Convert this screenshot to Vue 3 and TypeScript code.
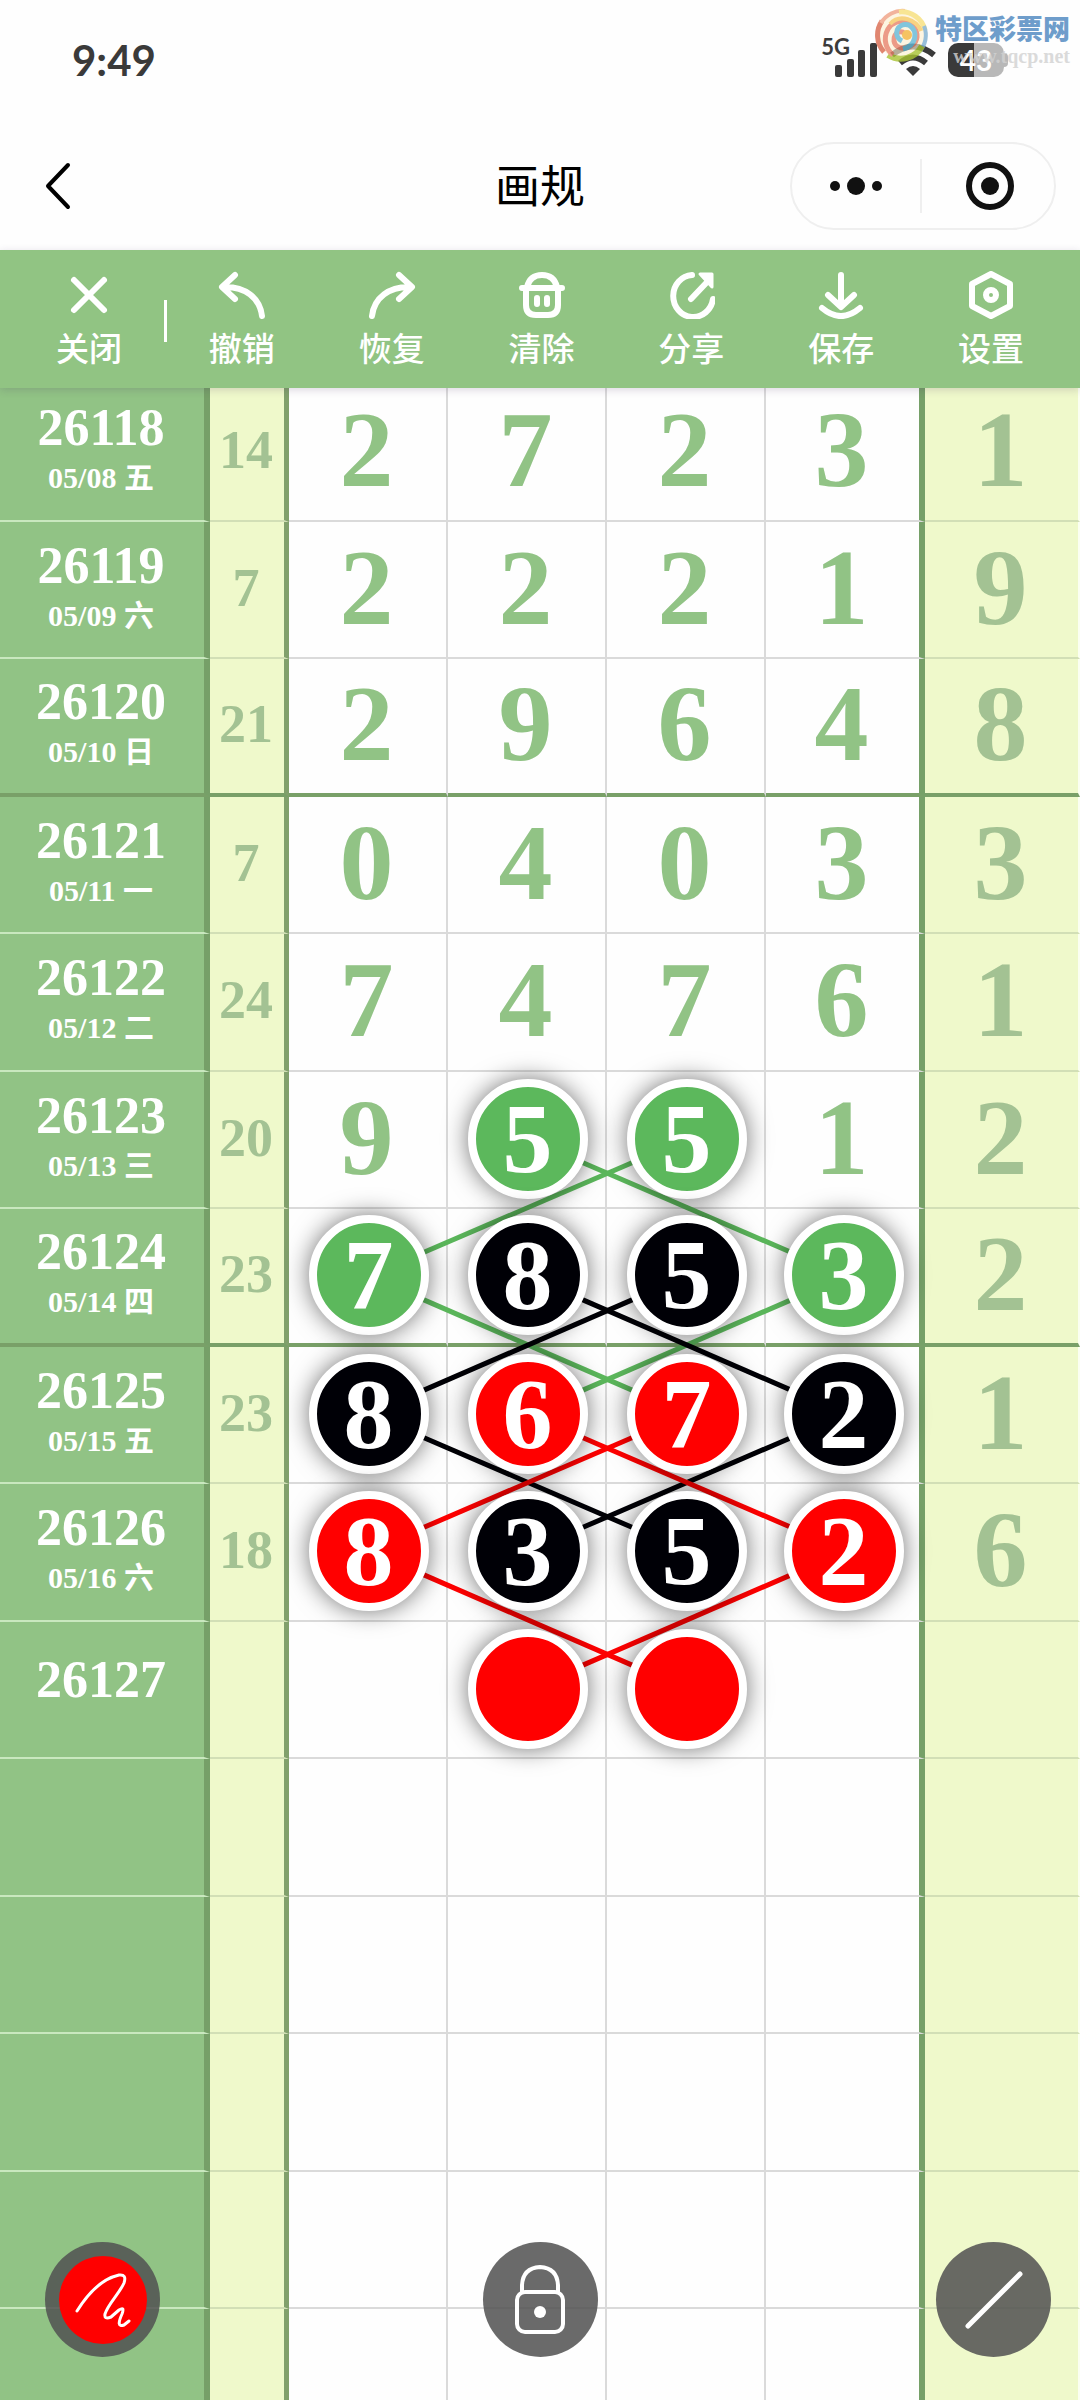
<script setup lang="ts">
type Tone = 'green' | 'black' | 'red'

interface Draw {
  issue: string
  date: string
  sum: string
  digits: string[]
  last: string
  balls?: (Tone | null)[]
  groupEnd?: boolean
}

const g: Tone = 'green'
const k: Tone = 'black'
const r: Tone = 'red'

const draws: Draw[] = [
  { issue: '26118', date: '05/08 五', sum: '14', digits: ['2', '7', '2', '3'], last: '1' },
  { issue: '26119', date: '05/09 六', sum: '7', digits: ['2', '2', '2', '1'], last: '9' },
  { issue: '26120', date: '05/10 日', sum: '21', digits: ['2', '9', '6', '4'], last: '8', groupEnd: true },
  { issue: '26121', date: '05/11 一', sum: '7', digits: ['0', '4', '0', '3'], last: '3' },
  { issue: '26122', date: '05/12 二', sum: '24', digits: ['7', '4', '7', '6'], last: '1' },
  { issue: '26123', date: '05/13 三', sum: '20', digits: ['9', '5', '5', '1'], last: '2', balls: [null, g, g, null] },
  { issue: '26124', date: '05/14 四', sum: '23', digits: ['7', '8', '5', '3'], last: '2', balls: [g, k, k, g], groupEnd: true },
  { issue: '26125', date: '05/15 五', sum: '23', digits: ['8', '6', '7', '2'], last: '1', balls: [k, r, r, k] },
  { issue: '26126', date: '05/16 六', sum: '18', digits: ['8', '3', '5', '2'], last: '6', balls: [r, k, k, r] },
  { issue: '26127', date: '', sum: '', digits: ['', '', '', ''], last: '', balls: [null, r, r, null] },
  ...Array.from({ length: 5 }, () => ({ issue: '', date: '', sum: '', digits: ['', '', '', ''], last: '' })),
]

// Each link joins two cells given as [column, row].
interface Link { from: [number, number]; to: [number, number]; tone: Tone }

const hexagon = (top: number, tone: Tone): Link[] => [
  { from: [1, top], to: [3, top + 1], tone },
  { from: [2, top], to: [0, top + 1], tone },
  { from: [0, top + 1], to: [2, top + 2], tone },
  { from: [3, top + 1], to: [1, top + 2], tone },
]

const colours: Record<Tone, string> = { green: '#5cb85c', black: '#000006', red: '#ff0000' }

// Row heights alternate between 138 and 137.
const cx = (col: number) => 80 + col * 159
const cy = (row: number) => Math.ceil(row * 137.5) + 67

const lines = [...hexagon(5, g), ...hexagon(6, k), ...hexagon(7, r)].map(({ from, to, tone }) => {
  const [x1, y1, x2, y2] = [cx(from[0]), cy(from[1]), cx(to[0]), cy(to[1])]
  const len = Math.hypot(x2 - x1, y2 - y1)
  const dx = ((x2 - x1) / len) * 58
  const dy = ((y2 - y1) / len) * 58
  return { x1: x1 + dx, y1: y1 + dy, x2: x2 - dx, y2: y2 - dy, stroke: colours[tone] }
})

const tools = [
  { name: 'undo', label: '撤销' },
  { name: 'redo', label: '恢复' },
  { name: 'clear', label: '清除' },
  { name: 'share', label: '分享' },
  { name: 'save', label: '保存' },
  { name: 'settings', label: '设置' },
]
</script>

<template>
  <div class="screen">
    <div class="status">
      <span class="clock">9:49</span>
      <div class="indicators">
        <span class="net">5G</span>
        <svg class="signal" width="44" height="34" viewBox="0 0 44 34" fill="#3a3a3a">
          <rect x="1" y="22" width="7" height="12" rx="2" />
          <rect x="13" y="16" width="7" height="18" rx="2" />
          <rect x="24" y="7" width="7" height="27" rx="2" />
          <rect x="36" y="0" width="7" height="34" rx="2" />
        </svg>
        <svg class="wifi" width="46" height="34" viewBox="0 0 46 34" fill="none" stroke="#3a3a3a" stroke-width="6">
          <path d="M2 12Q23 -5 44 12" />
          <path d="M10 20Q23 9 36 20" />
          <path d="M23 33L16 26Q23 20 30 26Z" fill="#3a3a3a" stroke="none" />
        </svg>
        <div class="battery"><span>43</span></div>
        <i class="nub"></i>
      </div>
      <div class="mark">
        <svg width="54" height="54" viewBox="0 0 54 54" fill="none">
          <circle cx="27" cy="27" r="24" fill="#fdf0d2" fill-opacity=".8" />
          <path d="M9 44A25 25 0 0 1 7 13" stroke="#d9694d" stroke-width="5" />
          <path d="M6 15A25 25 0 0 1 30 3" stroke="#f0a184" stroke-width="4" />
          <path d="M24 4A24 24 0 0 1 50 22" stroke="#f7e07a" stroke-width="5" />
          <path d="M49 18A24 24 0 0 1 44 44" stroke="#7fb0d0" stroke-width="4" />
          <path d="M47 38A24 24 0 0 1 13 47" stroke="#a9c433" stroke-width="6" />
          <path d="M31 28C28 20 18 24 19 33C21 44 40 42 42 29C43 14 22 7 13 21C7 32 12 42 18 47" stroke="#e8836a" stroke-width="5" />
          <path d="M27 33C17 28 22 14 34 17C44 23 41 38 28 41" stroke="#62b8d4" stroke-width="5" />
          <path d="M15 16C25 5 42 12 46 23" stroke="#f6c963" stroke-width="4" />
          <circle cx="32" cy="27" r="5" fill="#f3b53c" />
        </svg>
        <div class="mark-text">
          <strong>特区彩票网</strong>
          <span>www.tqcp.net</span>
        </div>
      </div>
    </div>

    <header class="nav">
      <button class="back" aria-label="返回">
        <svg width="28" height="50" viewBox="0 0 28 50" fill="none" stroke="#000" stroke-width="4" stroke-linecap="round" stroke-linejoin="round">
          <path d="M24 4L4 25L24 46" />
        </svg>
      </button>
      <h1>画规</h1>
      <div class="capsule">
        <button aria-label="更多">
          <svg width="54" height="20" viewBox="0 0 54 20" fill="#111">
            <circle cx="6" cy="10" r="5" /><circle cx="27" cy="10" r="9" /><circle cx="48" cy="10" r="5" />
          </svg>
        </button>
        <button aria-label="关闭小程序">
          <svg width="50" height="50" viewBox="0 0 50 50">
            <circle cx="25" cy="25" r="21" fill="none" stroke="#111" stroke-width="6" /><circle cx="25" cy="25" r="9" fill="#111" />
          </svg>
        </button>
      </div>
    </header>

    <nav class="toolbar">
      <button class="tool close">
        <svg viewBox="0 0 48 48"><path d="M9 9L39 39M39 9L9 39" /></svg>
        <span>关闭</span>
      </button>
      <i class="rule"></i>
      <button v-for="t in tools" :key="t.name" class="tool">
        <svg viewBox="0 0 48 48">
          <path v-if="t.name === 'undo'" d="M17 4L4 16L17 28M5 16C27 15 42 27 44 45" />
          <path v-else-if="t.name === 'redo'" d="M31 4L44 16L31 28M43 16C21 15 6 27 4 45" />
          <template v-else-if="t.name === 'clear'">
            <path d="M4 17H44M8 17V34Q8 44 18 44H30Q40 44 40 34V17M9 16Q12 4 24 4Q36 4 39 16" />
            <path d="M19 27V33M29 27V33" />
          </template>
          <template v-else-if="t.name === 'share'">
            <path d="M25 4A20 21 0 1 0 46 28M24 28L42 9" />
            <path d="M33 3H45V16Z" fill="#fff" stroke-width="3" />
          </template>
          <path v-else-if="t.name === 'save'" d="M24 4V34M11 24L24 36L37 24M5 37Q24 53 43 37" />
          <template v-else>
            <path d="M24 3L43 13V35L24 45L5 35V13Z" />
            <circle cx="24" cy="24" r="5" />
          </template>
        </svg>
        <span>{{ t.label }}</span>
      </button>
    </nav>

    <main class="chart">
      <table>
        <colgroup>
          <col class="c-issue" /><col class="c-sum" /><col /><col /><col /><col /><col class="c-last" />
        </colgroup>
        <tbody>
          <tr v-for="(d, i) in draws" :key="i" :class="{ group: d.groupEnd }">
            <th scope="row" :class="{ lone: d.issue && !d.date }">
              <div v-if="d.issue" class="issue">{{ d.issue }}</div>
              <div v-if="d.date" class="date">{{ d.date }}</div>
            </th>
            <td class="sum">{{ d.sum }}</td>
            <td v-for="(n, c) in d.digits" :key="c" class="digit" :class="{ hit: d.balls && d.balls[c] }">
              <span v-if="d.balls && d.balls[c]" class="ball" :class="d.balls[c]">{{ n }}</span>
              <span v-else class="plain">{{ n }}</span>
            </td>
            <td class="last"><span class="plain">{{ d.last }}</span></td>
          </tr>
        </tbody>
      </table>
      <svg class="links" viewBox="0 0 636 2063" preserveAspectRatio="none">
        <line v-for="(l, i) in lines" :key="i" v-bind="l" stroke-width="5" />
      </svg>
    </main>

    <div class="fabs">
      <button class="fab pen" aria-label="画笔">
        <svg width="88" height="88" viewBox="0 0 88 88" fill="none" stroke="#fff" stroke-width="3" stroke-linecap="round" stroke-linejoin="round">
          <circle cx="44" cy="44" r="44" fill="#f00" stroke="none" />
          <path d="M18 55C28 39 42 23 60 19Q68 18 65 27C60 38 49 48 46 58Q45 64 52 61L60 54Q66 50 63 58C59 67 59 71 65 69L70 65" />
        </svg>
      </button>
      <button class="fab" aria-label="锁定">
        <svg width="56" height="72" viewBox="0 0 56 72" fill="none" stroke="#fff" stroke-width="4">
          <rect x="5" y="28" width="46" height="40" rx="8" />
          <path d="M10 28V21Q11 4 28 3Q45 4 46 21V28" />
          <circle cx="28" cy="48" r="6" fill="#fff" stroke="none" />
        </svg>
      </button>
      <button class="fab" aria-label="直线">
        <svg width="60" height="60" viewBox="0 0 60 60" stroke="#fff" stroke-width="5" stroke-linecap="round">
          <path d="M4 56L56 4" />
        </svg>
      </button>
    </div>
  </div>
</template>

<style>
body {
  margin: 0;
  background: #fefefe;
}
</style>

<style scoped>
.screen {
  position: relative;
  display: flex;
  flex-direction: column;
  height: 100vh;
  overflow: hidden;
  background: #fefefe;
  font-family: "Noto Sans CJK SC", sans-serif;
}
button {
  border: 0;
  padding: 0;
  background: none;
  font: inherit;
  color: inherit;
}
svg {
  display: block;
}

.status {
  position: relative;
  flex: none;
  box-sizing: border-box;
  height: 122px;
  display: flex;
  align-items: center;
  justify-content: space-between;
  padding: 0 72px 2px;
}
.clock {
  font: 700 42px/48px Lato, sans-serif;
  color: #3a3a3a;
}
.indicators {
  display: flex;
  align-items: center;
}
.net {
  align-self: flex-start;
  margin-top: -8px;
  margin-right: -16px;
  font: 700 22px/24px Lato, sans-serif;
  color: #3a3a3a;
}
.wifi {
  margin: 0 12px;
}
.battery {
  width: 56px;
  height: 34px;
  border-radius: 10px;
  background: linear-gradient(90deg, #3a3a3a 46%, #b8b8b8 46%);
  font: 700 28px/34px Lato, sans-serif;
  text-align: center;
  color: #fff;
}
.nub {
  width: 4px;
  height: 14px;
  border-radius: 0 4px 4px 0;
  background: #b8b8b8;
}
.mark {
  position: absolute;
  top: 8px;
  right: 10px;
  display: flex;
  gap: 6px;
  opacity: .8;
}
.mark-text {
  display: flex;
  flex-direction: column;
}
.mark-text strong {
  font-size: 27px;
  line-height: 40px;
  font-weight: 900;
  color: #4b86bf;
}
.mark-text span {
  font: 700 20px/16px "Liberation Serif", serif;
  color: #d2d2d2;
  text-align: right;
}

.nav {
  flex: none;
  height: 128px;
  display: grid;
  grid-template-columns: 1fr auto 1fr;
  align-items: center;
}
.back {
  justify-self: start;
  margin-left: 44px;
}
h1 {
  margin: 0;
  padding-bottom: 4px;
  font-size: 45px;
  line-height: 60px;
  font-weight: 400;
  color: #000;
}
.capsule {
  justify-self: end;
  display: flex;
  align-items: center;
  box-sizing: border-box;
  width: 266px;
  height: 88px;
  margin-right: 24px;
  border: 2px solid #efefef;
  border-radius: 44px;
}
.capsule button {
  flex: 1;
  height: 54px;
  display: flex;
  align-items: center;
  justify-content: center;
}
.capsule button + button {
  padding-left: 4px;
  border-left: 2px solid #efefef;
}

.toolbar {
  position: relative;
  z-index: 5;
  flex: none;
  box-sizing: border-box;
  height: 138px;
  display: flex;
  align-items: center;
  padding: 4px 14px 0;
  background: #91c483;
  box-shadow: 0 2px 8px rgba(60, 40, 90, .18);
  color: #fff;
}
.tool {
  flex: 1;
  display: flex;
  flex-direction: column;
  align-items: center;
  gap: 4px;
  font-size: 33px;
  line-height: 48px;
  font-weight: 500;
}
.tool svg {
  width: 48px;
  height: 48px;
  fill: none;
  stroke: #fff;
  stroke-width: 6;
  stroke-linecap: round;
  stroke-linejoin: round;
}
.rule {
  width: 3px;
  height: 42px;
  background: #fff;
}

.chart {
  position: relative;
  flex: 1;
  min-height: 0;
  margin-top: -4px;
  overflow: hidden;
}
table {
  width: 100%;
  table-layout: fixed;
  border-collapse: separate;
  border-spacing: 0;
  font-family: "Liberation Serif", "Noto Sans CJK SC", serif;
  font-weight: 700;
}
.c-issue { width: 210px; }
.c-sum { width: 79px; }
.c-last { width: 155px; }
tr { height: 138px; }
tr:nth-child(even) { height: 137px; }
th, td {
  box-sizing: border-box;
  padding: 0 2px 4px 0;
  text-align: center;
  vertical-align: middle;
  border-bottom: 2px solid #dadada;
  border-right: 2px solid #dadada;
}
th {
  background: #91c385;
  border-bottom-color: #c9e8bf;
  border-right: 6px solid #76a068;
  color: #fff;
}
.lone { padding-bottom: 20px; }
.sum {
  background: #eff9cb;
  border-bottom-color: #d2dfb6;
  border-right: 5px solid #81a06c;
  font-size: 54px;
  line-height: 60px;
  color: #a3c293;
}
.digit {
  color: #91c385;
}
.hit {
  padding: 0 0 2px 2px;
}
.digit:nth-child(6) {
  border-right: 6px solid #76a068;
}
.last {
  background: #eff9cb;
  border-bottom-color: #d2dfb6;
  border-right-color: #fbfff2;
  color: #a3c293;
}
.group > * {
  border-bottom: 4px solid #79a068;
}
.issue {
  font-size: 52px;
  line-height: 56px;
}
.date {
  font-size: 30px;
  line-height: 44px;
}
.plain {
  display: block;
  font-size: 108px;
  line-height: 120px;
}
.ball {
  position: relative;
  z-index: 2;
  display: block;
  box-sizing: border-box;
  width: 120px;
  height: 120px;
  margin: 0 auto;
  border: 8px solid #fff;
  border-radius: 50%;
  box-shadow: 0 0 24px rgba(0, 0, 0, .55);
  font-size: 100px;
  line-height: 104px;
  color: #fff;
}
.green { background: #5cb85c; }
.black { background: #000006; }
.red { background: #f00; }
.links {
  position: absolute;
  top: 0;
  left: 289px;
  width: calc(100% - 444px);
  height: 2063px;
  z-index: 1;
}

.fabs {
  position: absolute;
  z-index: 4;
  left: 45px;
  right: 29px;
  bottom: 43px;
  display: grid;
  grid-template-columns: 1fr auto 1fr;
}
.fab {
  display: flex;
  align-items: center;
  justify-content: center;
  width: 115px;
  height: 115px;
  border-radius: 50%;
  background: rgba(82, 82, 82, .86);
}
.fab:nth-child(2) {
  margin-right: 16px;
}
.fab:last-child {
  justify-self: end;
}
</style>
